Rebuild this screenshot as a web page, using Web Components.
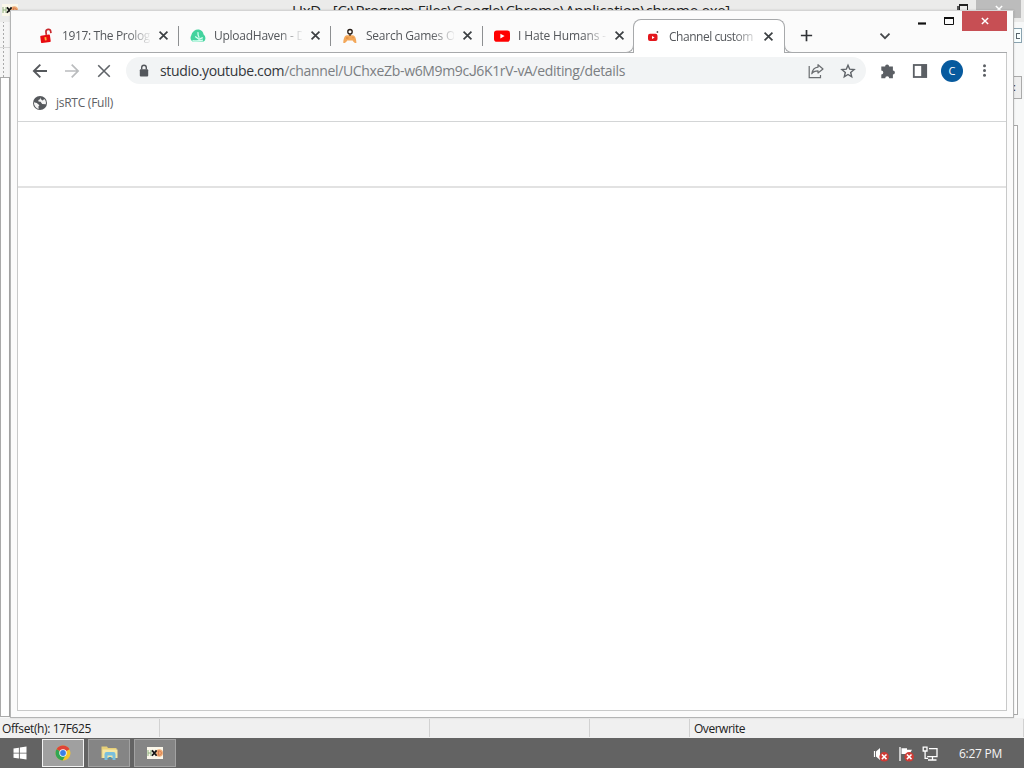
<!DOCTYPE html>
<html lang="en"><head><meta charset="utf-8"><title>Desktop</title>
<style>html,body{margin:0;width:1024px;height:768px;overflow:hidden}body{font-family:"Open Sans","Noto Sans",sans-serif}</style></head>
<body><desk-top></desk-top>
<script>
function define(name, html, ready){
  const t=document.createElement('template');t.innerHTML=html;
  customElements.define(name,class extends HTMLElement{
    constructor(){super();this.attachShadow({mode:'open'}).appendChild(t.content.cloneNode(true));}
    connectedCallback(){if(ready)ready.call(this,this.shadowRoot);}
  });
}
const icons={
lockopen:'<g transform="rotate(-8 8 8)"><rect x="2.2" y="7" width="9.8" height="7.5" rx="1" fill="#e80a10"/><path d="M8.5 7V4.2a2.4 2.4 0 0 1 4.8 0v1.6" fill="none" stroke="#c8282c" stroke-width="1.7"/><path d="M7.2 9v3.4" stroke="#ffb43c" stroke-width="1.8"/></g>',
haven:'<path d="M2.5 13.6A5 5 0 0 1 1.2 7.4 7 7 0 0 1 9 1.6a6 6 0 0 1 4.6 5 4.4 4.4 0 0 1 .2 7z" fill="#43d39e"/><path d="M8 4.2c-.4 2.4.2 3.8 1.2 5.6M5.2 8.4l3.8 2.8 3.8-1.6M2.5 12.6c3.6.4 7 .2 10.5-.4" stroke="#d5fff0" stroke-width="1.3" fill="none"/>',
pad:'<path d="M1.3 15c0-4 1.2-7.5 3.5-7.8h6c2.4.3 3.6 3.8 3.6 7.8-1.8.2-3-1.2-3.8-2.6H5.2c-.8 1.4-2 2.8-3.9 2.6z" fill="#f3a85a"/><path d="M8 5.5V8" stroke="#5c3a1c" stroke-width="1.4"/><circle cx="8" cy="3.7" r="2.2" fill="#fff" stroke="#241a14" stroke-width="1.3"/><path d="M4 10h2.5M10.5 9.7h1" stroke="#d98238"/>',
yt:'<rect x="0" y="2.5" width="16" height="11.2" rx="2.8" fill="#f00"/><path d="M6.4 5.7v4.8l4.2-2.4z" fill="#fff"/>',
studio:'<rect x="3" y="4.8" width="9.5" height="7.2" rx="2" fill="#e3171d"/><path d="M7 7v3l2.6-1.5z" fill="#fff"/><circle cx="12.4" cy="3" r=".9" fill="#555"/>',
x:'<path d="M3.8 3.8l8.4 8.4M12.2 3.8l-8.4 8.4" stroke="#3c4043" stroke-width="1.8"/>',
plus:'<path d="M8 2v12M2 8h12" stroke="#303236" stroke-width="1.8"/>',
chev:'<path d="M3.5 5.7L8 10.2l4.5-4.5" fill="none" stroke="#45484b" stroke-width="1.8"/>',
back:'<path d="M15 8H2M8.3 1.6L1.9 8l6.4 6.4" fill="none" stroke="#55585c" stroke-width="1.9"/>',
fwd:'<path d="M1 8h13M7.7 1.6L14.1 8l-6.4 6.4" fill="none" stroke="#babcbe" stroke-width="1.7"/>',
stop:'<path d="M1.4 1.4l13.2 13.2M14.6 1.4L1.4 14.6" stroke="#5f6368" stroke-width="1.8"/>',
lock:'<rect x="3.8" y="6.2" width="8.4" height="7.2" rx="1" fill="#54575c"/><path d="M5.7 6.5V4.6a2.3 2.3 0 0 1 4.6 0v1.9" fill="none" stroke="#54575c" stroke-width="1.4"/>',
share:'<path d="M1.2 3v11.6h11.3V12" fill="none" stroke="#6a6d70" stroke-width="1.2"/><path d="M10 1.7L15 6l-5 4V7.8C7 7.8 5 8.6 3.8 10.8 4.4 7 6.6 4.6 10 4.2z" fill="none" stroke="#6a6d70" stroke-width="1.2" stroke-linejoin="round"/>',
star:'<path d="M8 2.2l1.7 4 4.4.4-3.4 2.9 1 4.3L8 11.5l-3.7 2.3 1-4.3-3.4-2.9 4.4-.4z" fill="none" stroke="#5f6368" stroke-width="1.4"/>',
puzzle:'<path d="M1.3 3.6h3.8a2 2 0 1 1 4 0h3.8v3.9a2 2 0 1 1 0 4v3.8H9.2a2 2 0 1 0-4 0H1.3v-3.8a2 2 0 1 0 0-4z" fill="#5b5f64"/>',
panel:'<rect x="1.8" y="2" width="12.4" height="12" fill="#fff" stroke="#5b5f64" stroke-width="1.8"/><path d="M9.2 1.5h5.5v13H9.2z" fill="#5b5f64"/>',
dots:'<g fill="#5b5f64"><circle cx="8" cy="3" r="1.6"/><circle cx="8" cy="8" r="1.6"/><circle cx="8" cy="13" r="1.6"/></g>',
globe:'<circle cx="8" cy="8" r="7" fill="#55585c"/><path d="M1.8 7.3l3 .6 2.6 2.3-1 1.3.3 2.5C4 13.5 2 11 1.8 7.3zM8.2 2.3l.2 1.6-2 1v1.7l2.2.1 1.6 2.2 3.6.3c.5-2.2-.2-4-1.6-5.2l-1.4 1.4-1.2-.4z" fill="#f4f4f4"/>',
win:'<path fill="#fff" d="M1.5 3.5l5.4-.8v5H1.5zm6.3-.9L14.5 1.6v6.1H7.8zM1.5 8.5h5.4v5l-5.4-.8zm6.3 0h6.7v6.1l-6.7-1z"/>',
chrome:'<circle cx="8" cy="8" r="7.5" fill="#f5c52b"/><path d="M8 8L1.5 4.25A7.5 7.5 0 0 1 14.5 4.25z" fill="#df4436"/><path d="M8 8L1.5 4.25A7.5 7.5 0 0 0 7.5 15.5L11 9.8z" fill="#32a553"/><circle cx="8" cy="8" r="3.7" fill="#fff"/><circle cx="8" cy="8" r="2.9" fill="#3c7fe8"/>',
folder:'<path d="M0 1.5h5.5l1 1.6H15V13H0z" fill="#e6cf78"/><path d="M1 4.5h15V13H1z" fill="#f6e7a4"/><path d="M3 15V9.2Q3 7 5 7h7q2 0 2 2.2V15h-3v-4.5H6V15z" fill="#79bfdd"/><path d="M7 12h3v2H7z" fill="#4796b8"/>',
hxd:'<rect x="0" y="2" width="16" height="12" fill="#fbf7ea"/><path d="M1 5v6M1 8h3M4 5v6" stroke="#8db07f" stroke-width="1"/><circle cx="12.3" cy="8" r="3.7" fill="#efae78"/><path d="M11.5 5.8v4.5q3 0 3-2.2t-3-2.3" fill="none" stroke="#dd8050"/><path d="M5 5.4l4.6 5.4M9.6 5.4L5 10.8" stroke="#151515" stroke-width="1.7"/>',
vol:'<path d="M1.5 5v6" stroke="#fff" stroke-width="1.2"/><path d="M3 5.5L7 2v12L3 10.5z" fill="#fff"/><circle cx="11.2" cy="10.8" r="4.8" fill="#cf3b35"/><path d="M8.9 8.5l4.6 4.6M13.5 8.5l-4.6 4.6" stroke="#fff" stroke-width="1.5"/>',
flag:'<path d="M2 1v14" stroke="#fff" stroke-width="1.3"/><path d="M3.5 2.2H9v1.6h5l-1.8 3L14 9H8.5V8h-5z" fill="#fff"/><circle cx="11.2" cy="10.8" r="4.8" fill="#cf3b35"/><path d="M8.9 8.5l4.6 4.6M13.5 8.5l-4.6 4.6" stroke="#fff" stroke-width="1.5"/>',
net:'<path d="M7 2.7h8v8H5.2M10.5 11v2.8M6 14h8.5" fill="none" stroke="#fff" stroke-width="1.3"/><path d="M1.2 1.2h3.8v3.8H1.2zM3.1 5v7.3h3" fill="none" stroke="#fff" stroke-width="1.3"/>',
min:'<path d="M4 10.5h8" stroke="#111" stroke-width="2.2"/>',
max:'<path d="M3.5 4.5h9v7h-9z" fill="none" stroke="#111"/><path d="M3 5h10" stroke="#111" stroke-width="2"/>',
wx:'<path d="M3.8 4l8.4 8M12.2 4l-8.4 8" stroke="#fff" stroke-width="2"/>'
};
define('ui-icon','<style>:host{display:block;width:16px;height:16px;flex:none}svg{display:block;width:100%;height:100%}</style><svg viewBox="0 0 16 16"></svg>',function(r){r.querySelector('svg').innerHTML=icons[this.getAttribute('name')]||'';});
/* A single line of text whose tracking is adjusted to a given advance width. */
define('fit-text','<style>:host{display:block;white-space:pre;flex:none}span{display:inline-block}</style><span><slot></slot></span>',function(r){
  const s=r.querySelector('span'),w=+this.getAttribute('w');
  s.style.letterSpacing=(w-s.getBoundingClientRect().width)/this.textContent.length+'px';
  this.style.width=w+'px';
});
define('browser-tab',`<style>
:host{display:flex;box-sizing:border-box;width:152px;height:33px;flex:none;align-items:center;position:relative;padding-left:11px;font-size:12px;color:#54575b}
:host([sep])::after{content:"";position:absolute;right:0;top:7px;height:20px;width:1px;background:#8d8f91}
.label{margin-left:8px;width:88px;height:20px;line-height:20px;overflow:hidden;-webkit-mask-image:linear-gradient(90deg,#000 65px,transparent 90px)}
.x{margin-left:5.5px;width:15px;height:15px}
:host([active]){background:#fff;border:1px solid #a7a9ab;border-bottom:0;border-radius:8px 8px 0 0;height:34px;width:152px;padding-left:11px}
:host([active]) .x{margin-left:4px}:host([active]) .label{line-height:19px}
:host([active])::before,:host([active])::after{content:"";position:absolute;bottom:0;width:7px;height:7px;border-bottom:1px solid #a7a9ab}
:host([active])::before{left:-8px;border-right:1px solid #a7a9ab;border-bottom-right-radius:8px;background:#fbfbfb}
:host([active])::after{right:-8px;border-left:1px solid #a7a9ab;border-bottom-left-radius:8px;background:#fbfbfb}
</style><ui-icon class="f"></ui-icon><div class="label"><slot></slot></div><ui-icon class="x" name="x"></ui-icon>`,function(r){const f=r.querySelector('.f');f.setAttribute('name',this.getAttribute('icon'));f.connectedCallback();});
define('caption-buttons',`<style>:host{position:absolute;right:6px;top:0;display:flex;height:20px}div{width:27px;display:grid;place-items:center}.c{width:45px;background:#c74f54}.c ui-icon{width:12px;height:12px}
</style><div><ui-icon name="min"></ui-icon></div><div><ui-icon name="max"></ui-icon></div><div class="c"><ui-icon name="wx"></ui-icon></div>`);
define('tab-strip',`<style>:host{display:flex;align-items:flex-start;box-sizing:border-box;height:42px;padding:8px 0 0 10px;background:#fbfbfb;border-bottom:1px solid #a7a9ab}
.plus{margin:9px 0 0 14px;width:15px;height:15px}.chev{margin:9px 0 0 63px}</style>
<browser-tab icon="lockopen" sep><fit-text w="88">1917: The Prolog</fit-text></browser-tab>
<browser-tab icon="haven" sep><fit-text w="91">UploadHaven - D</fit-text></browser-tab>
<browser-tab icon="pad" sep><fit-text w="89">Search Games O</fit-text></browser-tab>
<browser-tab icon="yt"><fit-text w="88">I Hate Humans -</fit-text></browser-tab>
<browser-tab icon="studio" active style="margin-left:-2px"><fit-text w="84">Channel custom</fit-text></browser-tab>
<ui-icon class="plus" name="plus"></ui-icon><ui-icon class="chev" name="chev"></ui-icon>`);
define('nav-bar',`<style>:host{display:flex;align-items:center;height:35px;padding-left:14px}
.fwd,.stop{margin-left:16px}.stop{width:14px;height:14px;margin-left:17px}
.url{box-sizing:border-box;width:740px;height:27px;border-radius:14px;background:#f2f4f5;margin-left:15px;padding:0 9px 0 10px;display:flex;align-items:center;font-size:14px;color:#7b7e82}
.url fit-text{margin-left:8px;line-height:20px}b{font-weight:400;color:#34373b}i{font:14px/1 Roboto,sans-serif}.share{margin-left:183px}.star{margin-left:16px}
.pz{margin-left:14px}.pn{margin-left:16px}.av{width:22px;height:22px;border-radius:50%;background:#075a9e;color:#fff;font-size:11px;line-height:22px;text-align:center;margin-left:13px}.d{margin-left:14px;width:15px;height:15px}</style>
<ui-icon name="back"></ui-icon><ui-icon class="fwd" name="fwd"></ui-icon><ui-icon class="stop" name="stop"></ui-icon>
<div class="url"><ui-icon name="lock"></ui-icon><fit-text w="465"><b>studio.youtube.com</b>/channel/UChxeZb-w6M9m9c<i>J</i>6K1rV-vA/editing/details</fit-text><ui-icon class="share" name="share"></ui-icon><ui-icon class="star" name="star"></ui-icon></div>
<ui-icon class="pz" name="puzzle"></ui-icon><ui-icon class="pn" name="panel"></ui-icon><div class="av">C</div><ui-icon class="d" name="dots"></ui-icon>`);
define('bookmark-bar',`<style>:host{display:flex;align-items:center;height:34px;padding:0 0 4px 14px;border-bottom:1px solid #d3d5d6;font-size:12px;color:#5d6064;gap:8px;line-height:18px;box-sizing:border-box}</style><ui-icon name="globe"></ui-icon><fit-text w="57">jsRTC (Full)</fit-text>`);
define('browser-window',`<style>:host{position:absolute;left:10px;top:10px;width:1004px;height:708px;box-sizing:border-box;border:1px solid #b3b4b4;border-top-color:#d4d4d4;background:#fbfbfb;padding:0 6px 6px;display:flex;flex-direction:column;box-shadow:0 0 2px #0002}
.client{flex:1;border:1px solid #c8c9c9;border-top:0;background:#fff;display:flex;flex-direction:column}
.head{height:64px;border-bottom:2px solid #e2e2e2}</style>
<tab-strip></tab-strip><div class="client"><nav-bar></nav-bar><bookmark-bar></bookmark-bar><div class="head"></div></div><caption-buttons></caption-buttons>`);
define('hex-window',`<style>:host{position:absolute;inset:0 0 30px 0;background:#f7f8f8;display:flex;flex-direction:column;overflow:hidden}
.title{height:22px;flex:none;background:#ebebea;position:relative;display:flex;font-size:15px;line-height:20px;color:#222}
.title fit-text{margin-left:292px}.logo{position:absolute;left:2px;top:2px}.close{position:absolute;right:3px;top:0;width:45px;height:18px;background:#bcbcbc;display:grid;place-items:center}.close ui-icon{width:12px;height:12px;margin-top:-1px}.rest{position:absolute;left:959px;top:4px;width:7px;height:7px;border:1px solid #222;border-top-width:2px;box-shadow:-2px 2px 0 #555}
.body{flex:1;display:flex;justify-content:space-between;height:696px}.l{width:10px}.bars{height:55px;display:grid;grid-template-rows:25px 29px;gap:1px;background:#d8d8d8}.bars i{background:#f5f5f5 radial-gradient(circle,#aaa 35%,transparent 40%) 2px 2px/3px 4px;background-repeat:repeat-y}
.page{height:640px;border:1px solid #aaa;box-sizing:border-box;background:#fff}
.r{width:11px;font-size:11px;color:#222}.r .a{height:13px;margin-top:6px;border:1px solid #8aa3b0;width:7px;background:#f8ffff;display:grid;place-items:center}.r .a::before{content:"";width:3px;height:4px;border:1px solid #59656c;border-right:0}.r .b{margin-top:33px;height:21px;width:8px;border:1px solid #aaa;border-left:0;background:#eee;line-height:20px}.r .p{margin-top:26px;height:588px;width:4px;border:1px solid #aaa;border-left:0;background:#fff}
.status{height:20px;flex:none;display:grid;grid-template-columns:160px 270px 160px 100px 1fr;background:#f0f0f0;font-size:12px;color:#222;line-height:20px}.status div{border-right:1px solid #d2d2d2;padding-left:2px;height:18px;margin-top:1px}.status div:last-child{padding-left:4px}</style>
<div class="title"><ui-icon class="logo" name="hxd"></ui-icon><fit-text w="438">HxD - [C:\\Program Files\\Google\\Chrome\\Application\\chrome.exe]</fit-text><div class="rest"></div><div class="close"><ui-icon name="wx"></ui-icon></div></div>
<div class="body"><div class="l"><div class="bars"><i></i><i></i></div><div class="page"></div></div><div class="r"><div class="a"></div><div class="b">:</div><div class="p"></div></div></div>
<div class="status"><div><fit-text w="89">Offset(h): 17F625</fit-text></div><div></div><div></div><div></div><div><fit-text w="51">Overwrite</fit-text></div></div>`);
define('task-bar',`<style>:host{position:absolute;left:0;right:0;bottom:0;height:30px;background:#636363;display:flex;align-items:center;color:#f5f5f5;font-size:12px}
.s{margin:0 14px 0 12px}.b{box-sizing:border-box;width:42px;height:28px;border:1px solid #a2a2a2;background:#858585;margin-right:4px;display:grid;place-items:center}.b.on{border-color:#f2f2f2;background:#a0a0a0}.wide{width:17px}
.tray{margin-left:auto;display:flex;align-items:center;gap:9px;padding-right:22px}.tray ui-icon{margin-top:2px}.vol,.flag{position:relative;left:1px}.time{margin-left:12px;line-height:20px;margin-top:1px}</style>
<ui-icon class="s" name="win"></ui-icon><div class="b on"><ui-icon name="chrome"></ui-icon></div><div class="b"><ui-icon class="wide" name="folder"></ui-icon></div><div class="b"><ui-icon name="hxd"></ui-icon></div>
<div class="tray"><ui-icon class="vol" name="vol"></ui-icon><ui-icon class="flag" name="flag"></ui-icon><ui-icon name="net"></ui-icon><fit-text class="time" w="43">6:27 PM</fit-text></div>`);
define('desk-top','<style>:host{display:block;position:relative;width:1024px;height:768px;overflow:hidden}</style><hex-window></hex-window><browser-window></browser-window><task-bar></task-bar>');
</script></body></html>
